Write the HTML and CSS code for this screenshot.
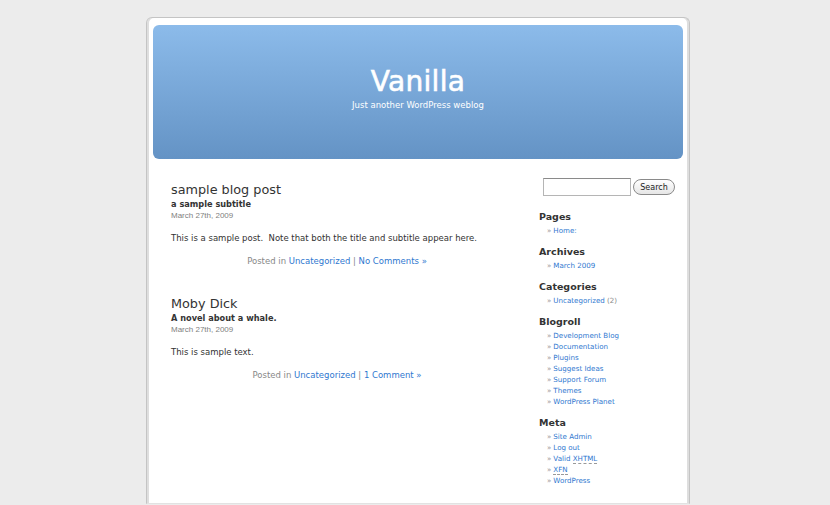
FILE: index.html
```html
<!DOCTYPE html>
<html>
<head>
<meta charset="utf-8">
<link rel="stylesheet" href="styles.css">
</head>
<body>
<div class="page">
  <div class="header">
    <h1 class="blog-title">Vanilla</h1>
    <div class="description">Just another WordPress weblog</div>
  </div>
  <div class="content-wrap">
    <div class="main">
      <div class="post">
        <h2 class="post-title">sample blog post</h2>
        <div class="subtitle">a sample subtitle</div>
        <div class="date">March 27th, 2009</div>
        <p class="entry">This is a sample post.&nbsp; Note that both the title and subtitle appear here.</p>
        <p class="meta">Posted in <a href="#">Uncategorized</a> | <a href="#">No Comments »</a></p>
      </div>
      <div class="post">
        <h2 class="post-title">Moby Dick</h2>
        <div class="subtitle">A novel about a whale.</div>
        <div class="date">March 27th, 2009</div>
        <p class="entry">This is sample text.</p>
        <p class="meta">Posted in <a href="#">Uncategorized</a> | <a href="#">1 Comment »</a></p>
      </div>
    </div>
    <div class="sidebar">
      <form class="search">
        <input class="search-input" type="text">
        <button class="search-btn" type="button">Search</button>
      </form>
      <div class="widget">
        <h3 class="widget-title">Pages</h3>
        <ul class="links">
          <li><a href="#">Home:</a></li>
        </ul>
      </div>
      <div class="widget">
        <h3 class="widget-title">Archives</h3>
        <ul class="links">
          <li><a href="#">March 2009</a></li>
        </ul>
      </div>
      <div class="widget">
        <h3 class="widget-title">Categories</h3>
        <ul class="links">
          <li><a href="#">Uncategorized</a> <span class="count">(2)</span></li>
        </ul>
      </div>
      <div class="widget">
        <h3 class="widget-title">Blogroll</h3>
        <ul class="links">
          <li><a href="#">Development Blog</a></li>
          <li><a href="#">Documentation</a></li>
          <li><a href="#">Plugins</a></li>
          <li><a href="#">Suggest Ideas</a></li>
          <li><a href="#">Support Forum</a></li>
          <li><a href="#">Themes</a></li>
          <li><a href="#">WordPress Planet</a></li>
        </ul>
      </div>
      <div class="widget">
        <h3 class="widget-title">Meta</h3>
        <ul class="links">
          <li><a href="#">Site Admin</a></li>
          <li><a href="#">Log out</a></li>
          <li><a href="#">Valid <abbr class="abbr">XHTML</abbr></a></li>
          <li><a href="#"><abbr class="abbr">XFN</abbr></a></li>
          <li><a href="#">WordPress</a></li>
        </ul>
      </div>
    </div>
  </div>
</div>
</body>
</html>
```

FILE: styles.css
```css
html, body {
  margin: 0;
  padding: 0;
}
body {
  background: #ececec;
  font-family: "DejaVu Sans", Verdana, sans-serif;
  color: #333;
  height: 505px;
  overflow: hidden;
}
a {
  color: #2f78d0;
  text-decoration: none;
}
.page {
  width: 530px;
  height: 478px;
  margin: 17px 0 0 146px;
  padding: 7px 6px 0 6px;
  background: #fff;
  border: 1px solid #c4c4c4;
  border-bottom-color: #e2e2e2;
  border-radius: 6px 6px 0 0;
  box-shadow: inset 2px 0 0 #dedede, inset -2px 0 0 #dedede;
}
.header {
  height: 134px;
  border-radius: 6px;
  background: linear-gradient(to bottom, #8cbbea, #6493c5);
  text-align: center;
  color: #fff;
  overflow: hidden;
}
.blog-title {
  margin: 0;
  padding-top: 39px;
  font-size: 28px;
  line-height: 36px;
  font-weight: normal;
  -webkit-text-stroke: 0.6px #fff;
  letter-spacing: 0.3px;
}
.description {
  font-size: 8.5px;
  line-height: 12px;
  margin-top: -1px;
}
.content-wrap {
  display: flex;
}
.main {
  width: 332px;
  margin-left: 18px;
  padding-top: 22px;
}
.post {
  margin-bottom: 28px;
}
.post-title {
  margin: 0;
  font-size: 12.8px;
  line-height: 18px;
  font-weight: normal;
  color: #333;
}
.subtitle {
  font-size: 8.2px;
  font-weight: bold;
  line-height: 11px;
}
.date {
  font-family: "Liberation Sans", Arial, sans-serif;
  font-size: 8px;
  line-height: 12px;
  color: #808080;
}
.entry {
  margin: 10px 0 0;
  font-size: 8.5px;
  line-height: 12px;
}
.meta {
  margin: 11px 0 0;
  text-align: center;
  font-size: 8.5px;
  line-height: 12px;
  color: #888;
}
.sidebar {
  margin-left: 36px;
  width: 140px;
  padding-top: 19px;
}
.search {
  display: flex;
  align-items: center;
  margin: 0 0 0 4px;
}
.search-input {
  width: 88px;
  height: 18px;
  box-sizing: border-box;
  border: 1px solid #b5b5b5;
  border-top-color: #8a8a8a;
  padding: 0;
  margin: 0;
}
.search-btn {
  margin-left: 2px;
  height: 16px;
  width: 42px;
  padding: 0;
  border: 1px solid #8a8a8a;
  border-radius: 8px;
  background: linear-gradient(#fff, #e6e6e6);
  font-family: "DejaVu Sans", sans-serif;
  font-size: 8px;
  color: #222;
}
.widget {
  margin-top: 14px;
}
.widget + .widget {
  margin-top: 9px;
}
.widget-title {
  margin: 0;
  font-size: 9.5px;
  line-height: 13px;
  font-weight: bold;
  color: #333;
}
.links {
  list-style: none;
  margin: 2px 0 0;
  padding: 0 0 0 8px;
}
.links li {
  font-size: 7.1px;
  line-height: 11px;
}
.links li::before {
  content: "»";
  color: #999;
  margin-right: 2px;
}
.count {
  color: #888;
}
.abbr {
  text-decoration: none;
  border-bottom: 1px dashed #999;
}
```
